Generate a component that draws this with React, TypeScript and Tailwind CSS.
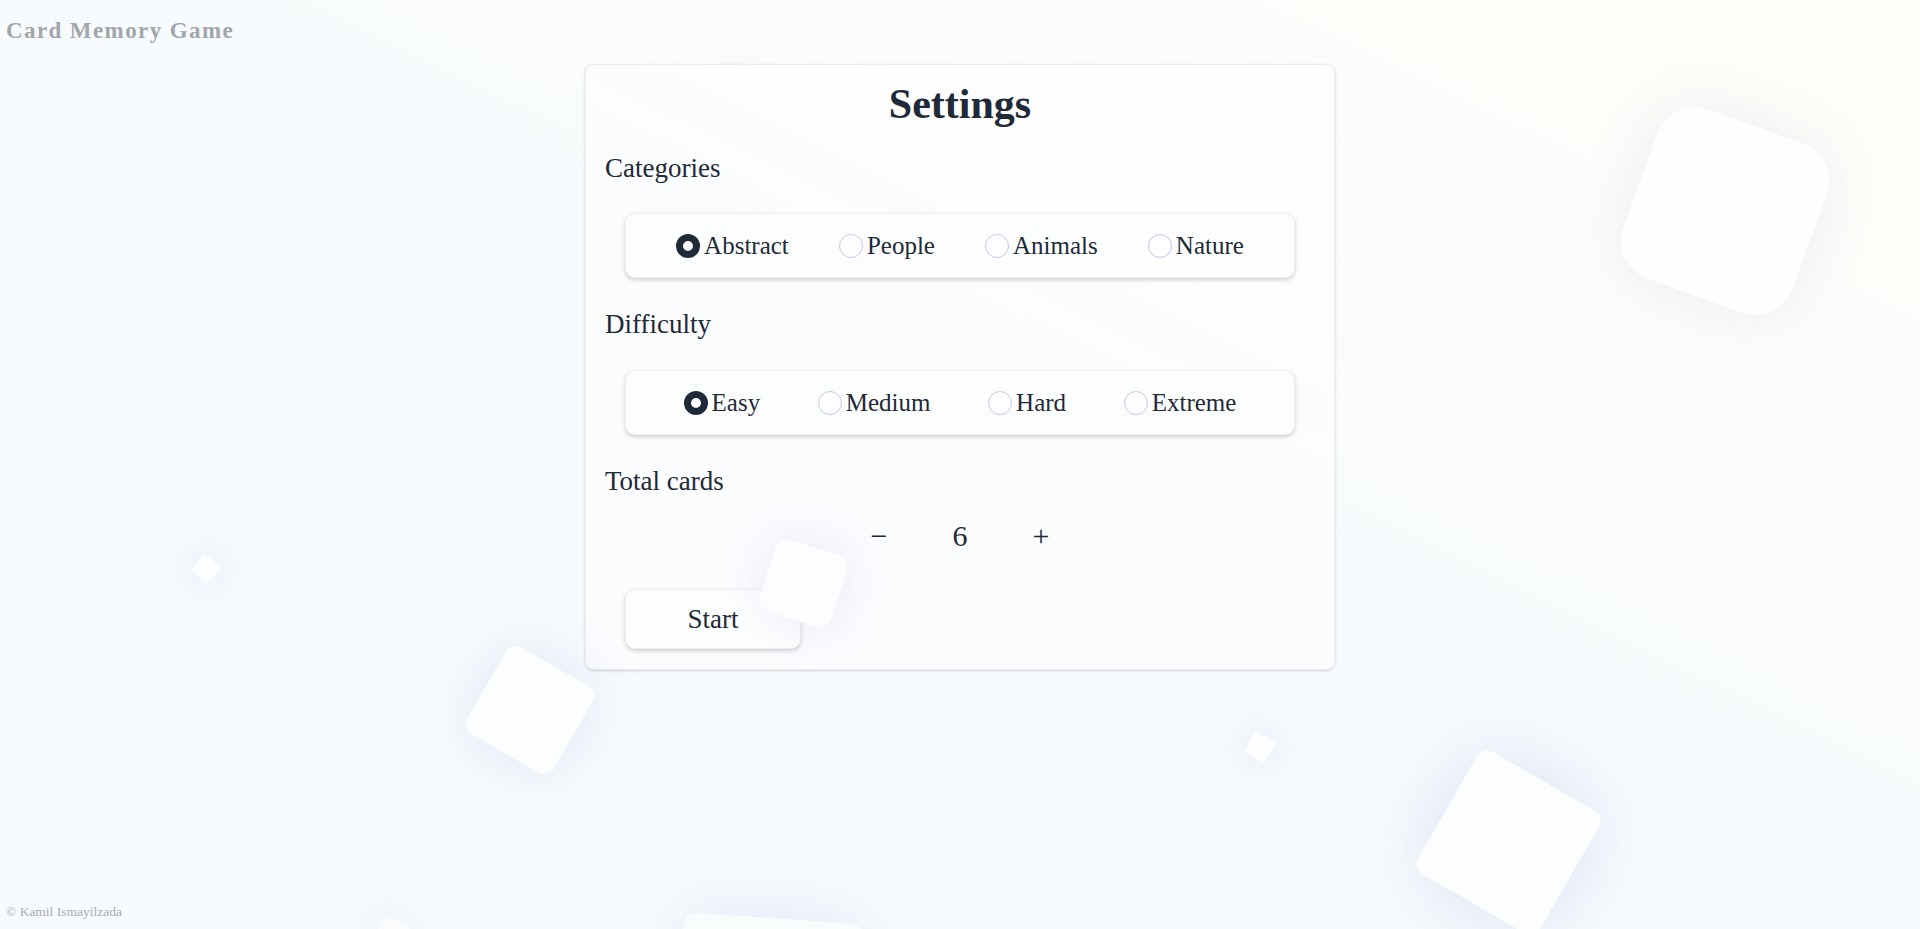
import React, { useState } from "react";

const serif = "font-['Liberation_Serif','Times_New_Roman',serif]";

function Radio({ checked }: { checked: boolean }) {
  return checked ? (
    <span className="block h-6 w-6 shrink-0 rounded-full border-[7px] border-[#1f2937] bg-white" />
  ) : (
    <span className="block h-6 w-6 shrink-0 rounded-full border border-[#c5c6ee] bg-white" />
  );
}

function RadioGroup({
  options,
  value,
  onChange,
}: {
  options: string[];
  value: string;
  onChange: (v: string) => void;
}) {
  return (
    <div className="mx-5 flex h-[65px] items-center justify-evenly rounded-[10px] border border-[#eef0f2] bg-[#fcfefe] shadow-[0_2px_4px_rgba(0,0,0,0.18)]">
      {options.map((o) => (
        <label
          key={o}
          className="flex cursor-pointer items-center gap-[4px]"
          onClick={() => onChange(o)}
        >
          <Radio checked={value === o} />
          <span className="text-[25px] leading-[30px] text-[#1f2937]">{o}</span>
        </label>
      ))}
    </div>
  );
}

export default function App() {
  const [cat, setCat] = useState("Abstract");
  const [diff, setDiff] = useState("Easy");
  const [count, setCount] = useState(6);

  return (
    <div
      className={`relative flex min-h-screen w-full flex-col overflow-hidden bg-[linear-gradient(to_bottom_left,#fffef8,#f8fbfd_45%,#f8fbfd)] ${serif}`}
    >
      <header className="relative z-10 pl-[6px] pt-4">
        <h1 className="text-[23px] font-bold leading-[30px] tracking-[1.4px] text-[#a2a6ab]">
          Card Memory Game
        </h1>
      </header>

      <main className="relative z-10 mx-auto mt-[18px] w-[750px] rounded-[8px] border border-[#e9ebee] bg-white/40 px-[19px] pb-[20px] pt-[19px] shadow-[0_1px_3px_rgba(0,0,0,0.16)]">
        <h2 className="h-10 text-center text-[42px] font-bold leading-[40px] text-[#1f2937]">
          Settings
        </h2>

        <div className="mt-[29px] text-[27px] leading-[30px] text-[#1f2937]">Categories</div>
        <div className="mt-[30px]">
          <RadioGroup
            options={["Abstract", "People", "Animals", "Nature"]}
            value={cat}
            onChange={setCat}
          />
        </div>

        <div className="mt-[31px] text-[27px] leading-[30px] text-[#1f2937]">Difficulty</div>
        <div className="mt-[31px]">
          <RadioGroup
            options={["Easy", "Medium", "Hard", "Extreme"]}
            value={diff}
            onChange={setDiff}
          />
        </div>

        <div className="mt-[31px] text-[27px] leading-[30px] text-[#1f2937]">Total cards</div>
        <div className="mt-5 flex h-10 items-center justify-center gap-[41px] text-[30px] leading-10 text-[#1f2937]">
          <button
            className="w-10 text-center"
            onClick={() => setCount((c) => Math.max(2, c - 2))}
          >
            −
          </button>
          <span className="w-10 text-center">{count}</span>
          <button className="w-10 text-center" onClick={() => setCount((c) => c + 2)}>
            +
          </button>
        </div>

        <button className="ml-5 mt-[33px] h-[60px] w-[176px] rounded-[10px] border border-[#eceef1] bg-[#fcfefe] text-[27px] text-[#1f2937] shadow-[0_2px_4px_rgba(0,0,0,0.18)]">
          Start
        </button>
      </main>

      <footer className="relative z-10 mt-auto pb-[9px] pl-[6px] text-[13.5px] leading-4 text-[#a7abb0]">
        © Kamil Ismayilzada
      </footer>

      {/* floating decorative cards */}
      <div className="pointer-events-none absolute inset-0 z-20">
        <div className="absolute left-[1635px] top-[121px] h-[180px] w-[180px] rotate-[20deg] rounded-[40px] bg-[#fdfefd] shadow-[0_0_60px_rgba(100,110,180,0.11)]" />
        <div className="absolute left-[195px] top-[558px] h-[22px] w-[22px] rotate-[40deg] rounded-[4px] bg-[#fbfdfe] shadow-[0_0_34px_16px_rgba(110,110,200,0.06)]" />
        <div className="absolute left-[480px] top-[660px] h-[100px] w-[100px] rotate-[30deg] rounded-[12px] bg-[#fcfefe] shadow-[0_0_60px_rgba(90,100,200,0.15)]" />
        <div className="absolute left-[766px] top-[546px] h-[75px] w-[75px] rotate-[18deg] rounded-[12px] bg-[#fbfdfe] shadow-[0_0_50px_rgba(90,100,200,0.12)]" />
        <div className="absolute left-[1248px] top-[735px] h-[24px] w-[24px] rotate-[28deg] rounded-[3px] bg-[#fbfdfe] shadow-[0_0_34px_16px_rgba(110,110,200,0.06)]" />
        <div className="absolute left-[1438px] top-[772px] h-[141px] w-[141px] rotate-[30deg] rounded-[12px] bg-[#fcfefe] shadow-[0_0_80px_rgba(90,100,200,0.18)]" />
        <div className="absolute left-[377px] top-[920px] h-[30px] w-[30px] rotate-[15deg] rounded-[3px] bg-[#f9fbfd] shadow-[0_0_34px_16px_rgba(110,110,200,0.05)]" />
        <div className="absolute left-[678px] top-[918px] h-[180px] w-[180px] rotate-[4deg] rounded-[12px] bg-[#f9fcfd] shadow-[0_0_70px_rgba(90,100,200,0.14)]" />
      </div>
    </div>
  );
}
